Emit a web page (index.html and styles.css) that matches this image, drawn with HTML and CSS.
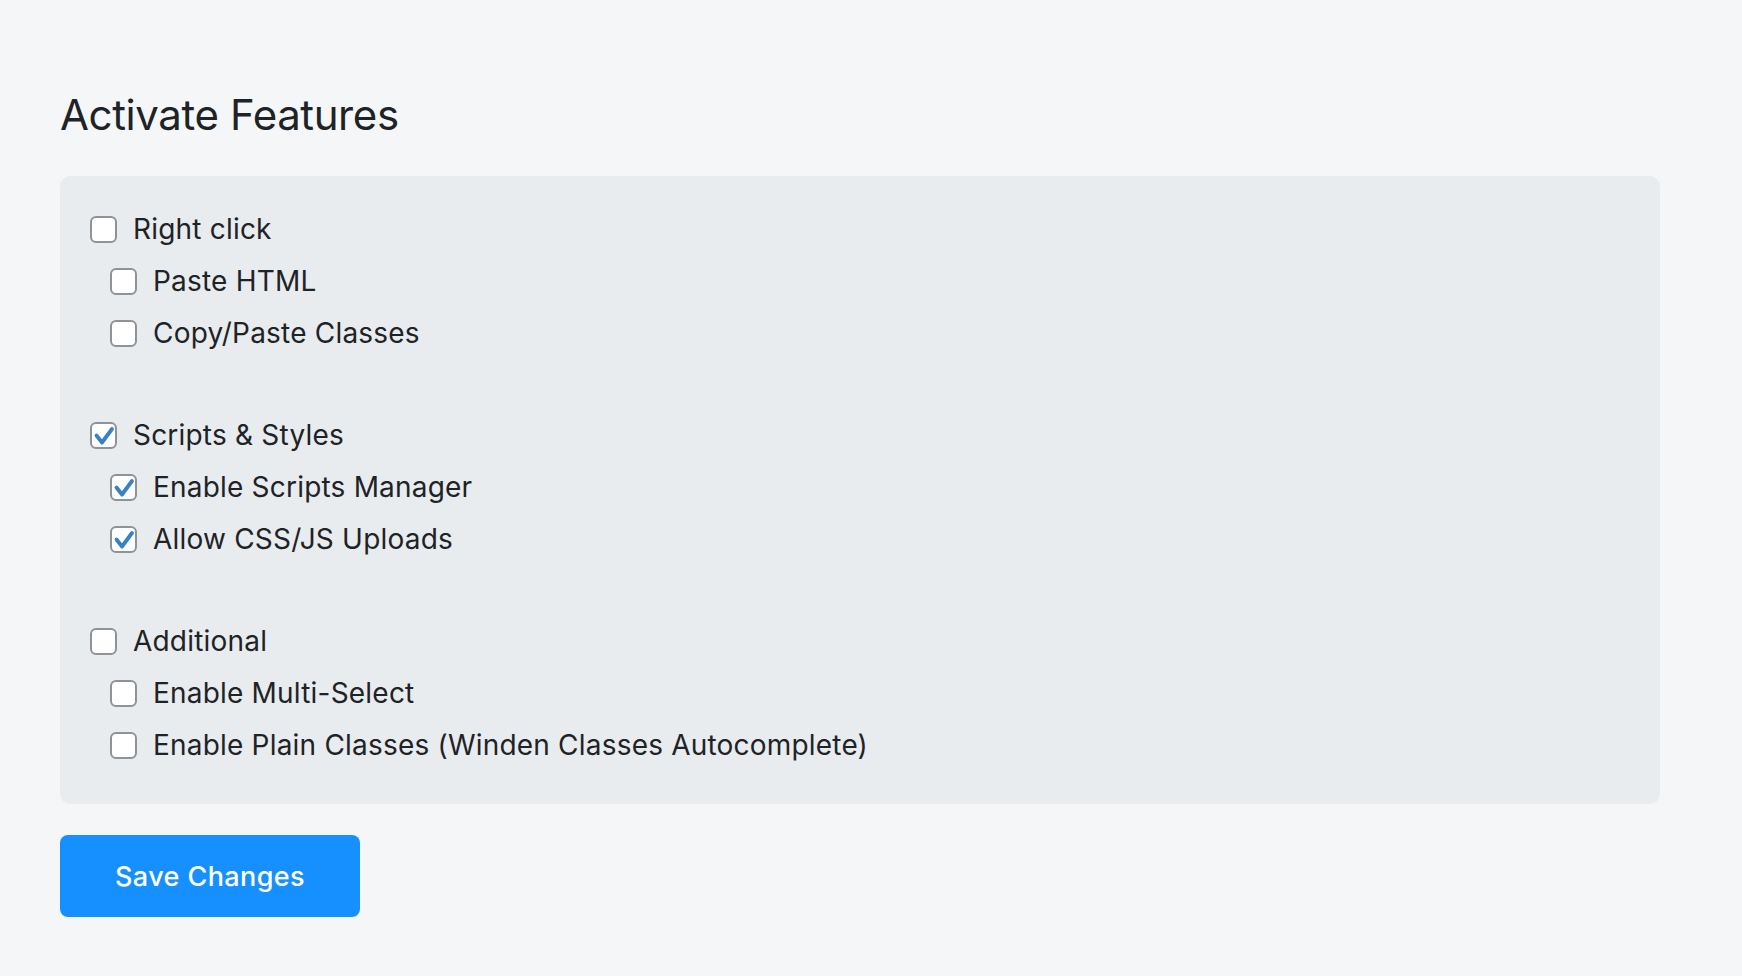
FILE: index.html
```html
<!DOCTYPE html>
<html lang="en">
<head>
<meta charset="utf-8">
<title>Activate Features</title>
<link rel="stylesheet" href="styles.css">
</head>
<body>
<div class="wrap">
  <h1 class="title">Activate Features</h1>
  <div class="panel">
    <div class="group">
      <label class="row"><span class="box"></span><span class="text">Right click</span></label>
      <label class="row sub"><span class="box"></span><span class="text">Paste HTML</span></label>
      <label class="row sub"><span class="box"></span><span class="text">Copy/Paste Classes</span></label>
    </div>
    <div class="group">
      <label class="row"><span class="box checked"><svg viewBox="0 0 23 23"><path d="M4.5 11.5 L10 18.5 L20 5"/></svg></span><span class="text">Scripts &amp; Styles</span></label>
      <label class="row sub"><span class="box checked"><svg viewBox="0 0 23 23"><path d="M4.5 11.5 L10 18.5 L20 5"/></svg></span><span class="text">Enable Scripts Manager</span></label>
      <label class="row sub"><span class="box checked"><svg viewBox="0 0 23 23"><path d="M4.5 11.5 L10 18.5 L20 5"/></svg></span><span class="text">Allow CSS/JS Uploads</span></label>
    </div>
    <div class="group">
      <label class="row"><span class="box"></span><span class="text">Additional</span></label>
      <label class="row sub"><span class="box"></span><span class="text">Enable Multi-Select</span></label>
      <label class="row sub"><span class="box"></span><span class="text">Enable Plain Classes (Winden Classes Autocomplete)</span></label>
    </div>
  </div>
  <button class="save">Save Changes</button>
</div>
</body>
</html>
```

FILE: styles.css
```css
* { box-sizing: border-box; }
html, body { margin: 0; padding: 0; }
body {
  background: #f5f6f8;
  font-family: Inter, "Noto Sans", sans-serif;
  color: #1d2327;
}
.wrap {
  padding: 85px 0 0 60px;
  width: 1660px;
}
.title {
  margin: 0;
  font-size: 42px;
  font-weight: 400;
  line-height: 60px;
  letter-spacing: -0.4px;
  color: #1d2327;
}
.panel {
  margin-top: 31px;
  width: 1600px;
  background: #e9ecee;
  border-radius: 10px;
  padding: 27px 30px 33px;
  display: flex;
  flex-direction: column;
  gap: 50px;
}
.group { display: flex; flex-direction: column; }
.row {
  height: 52px;
  display: flex;
  align-items: center;
  gap: 16px;
}
.row.sub { padding-left: 20px; }
.box {
  width: 27px;
  height: 27px;
  border: 2px solid #8f9297;
  border-radius: 6px;
  background: #fff;
  flex: none;
  display: flex;
  align-items: center;
  justify-content: center;
}
.box svg { width: 23px; height: 23px; }
.box svg path {
  fill: none;
  stroke: #3582c4;
  stroke-width: 3.8;
  stroke-linecap: round;
  stroke-linejoin: round;
}
.text {
  font-size: 28px;
  letter-spacing: 0.2px;
  line-height: 1;
}
.save {
  margin-top: 31px;
  width: 300px;
  height: 82px;
  border: none;
  border-radius: 8px;
  background: #1690ff;
  color: #fff;
  font-family: Inter, "Noto Sans", sans-serif;
  font-size: 27px;
  font-weight: 500;
  letter-spacing: 0.4px;
}
```
